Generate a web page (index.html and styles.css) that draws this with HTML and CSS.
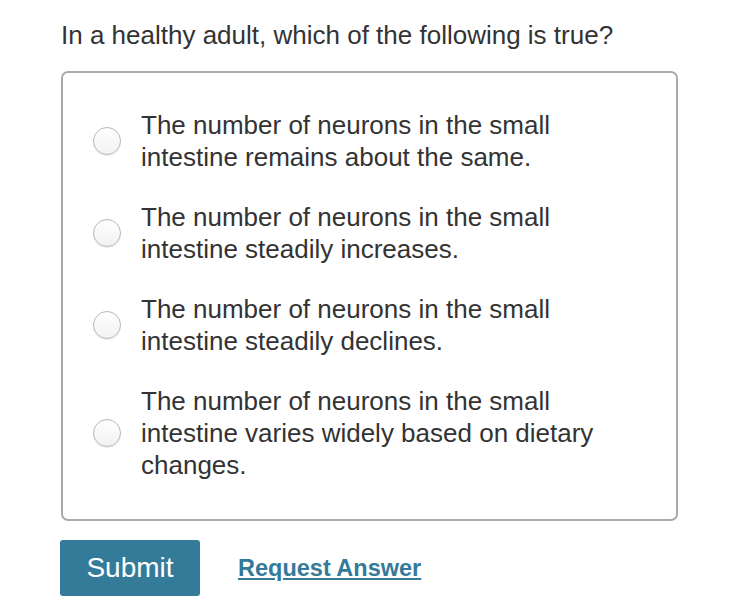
FILE: index.html
```html
<!DOCTYPE html>
<html>
<head>
    <meta charset="utf-8">
    <title>Question</title>
    <link rel="stylesheet" href="styles.css">
</head>
<body>
<div class="question">
    <p class="prompt">In a healthy adult, which of the following is true?</p>
    <div class="choices">
        <label class="choice"><span class="radio"></span><span class="txt">The number of neurons in the small intestine remains about the same.</span></label>
        <label class="choice"><span class="radio"></span><span class="txt">The number of neurons in the small intestine steadily increases.</span></label>
        <label class="choice"><span class="radio"></span><span class="txt">The number of neurons in the small intestine steadily declines.</span></label>
        <label class="choice"><span class="radio"></span><span class="txt">The number of neurons in the small intestine varies widely based on dietary changes.</span></label>
    </div>
    <div class="actions">
        <button class="submit" type="button">Submit</button>
        <a class="request" href="#">Request Answer</a>
    </div>
</div>
</body>
</html>
```
FILE: styles.css
```css
body {
    margin: 0;
    padding: 0;
    background: #fff;
    font-family: "Liberation Sans", Arial, Helvetica, sans-serif;
    color: #333;
}
.question {
    padding: 19px 0 0 61px;
    width: 617px;
}
.prompt {
    margin: 0;
    font-size: 26px;
    line-height: 32px;
    color: #333;
}
.choices {
    margin-top: 20px;
    border: 2px solid #aaa;
    border-radius: 7px;
    padding: 36px 0 38px 30px;
    display: flex;
    flex-direction: column;
    gap: 28px;
}
.choice {
    display: flex;
    align-items: center;
    font-size: 26px;
    line-height: 32px;
    color: #333;
}
.radio {
    flex: none;
    width: 26px;
    height: 26px;
    border: 1px solid #b8b8b8;
    border-radius: 50%;
    background: linear-gradient(#fff, #f2f2f2);
    box-shadow: 0 1px 1px rgba(0,0,0,0.08);
    margin-right: 20px;
}
.txt {
    width: 480px;
}
.actions {
    display: flex;
    align-items: center;
    margin-top: 19px;
    gap: 38px;
}
.submit {
    width: 140px;
    height: 56px;
    border: 0;
    border-radius: 3px;
    background: #347a99;
    color: #fff;
    font: 28px "Liberation Sans", Arial, sans-serif;
    padding: 0;
    margin-left: -1px;
}
.request {
    color: #347a99;
    font-size: 23.5px;
    font-weight: bold;
    text-decoration: underline;
}
```
